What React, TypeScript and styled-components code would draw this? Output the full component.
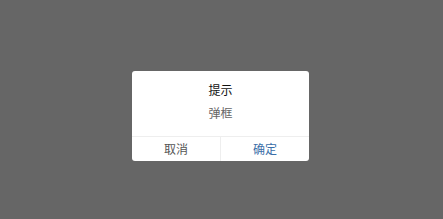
import styled, { createGlobalStyle } from 'styled-components';

const GlobalStyle = createGlobalStyle`
    html, body {
        margin: 0;
        padding: 0;
        height: 100%;
    }

    body {
        background: #666666;
        font-family: "Noto Sans CJK SC", "Noto Sans", sans-serif;
    }

    #root {
        height: 100%;
    }
`;

const Overlay = styled.div`
    height: 219px;
    box-sizing: border-box;
    padding: 71px 2px 0 0;

    display: flex;
    justify-content: center;
    align-items: flex-start;
`;

const Dialog = styled.div`
    width: 177px;
    height: 90px;
    background: #ffffff;
    border-radius: 3px;
    overflow: hidden;

    display: flex;
    flex-direction: column;
`;

const Content = styled.div`
    flex: 1;
    padding-top: 11px;
    text-align: center;
`;

const Title = styled.div`
    font-size: 12px;
    line-height: 16px;
    color: #111111;
`;

const Message = styled.div`
    margin-top: 7px;
    font-size: 12px;
    line-height: 16px;
    color: #666666;
`;

const Footer = styled.div`
    height: 24px;
    border-top: 1px solid #eeeeee;
    display: flex;
`;

const Button = styled.button<{ $primary?: boolean }>`
    flex: 1;
    margin: 0;
    padding: 0;
    border: none;
    background: transparent;
    font-family: inherit;
    font-size: 12px;
    line-height: 24px;
    color: ${({ $primary }) => ($primary ? '#3a6ea8' : '#555555')};

    & + & {
        border-left: 1px solid #eeeeee;
    }
`;

export default function App() {
    return (
        <>
            <GlobalStyle />
            <Overlay>
                <Dialog>
                    <Content>
                        <Title>提示</Title>
                        <Message>弹框</Message>
                    </Content>
                    <Footer>
                        <Button>取消</Button>
                        <Button $primary>确定</Button>
                    </Footer>
                </Dialog>
            </Overlay>
        </>
    );
}
